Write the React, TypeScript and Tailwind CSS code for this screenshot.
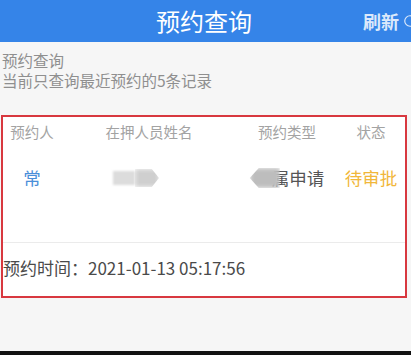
import { RotateCw } from 'lucide-react';

const FONT = { fontFamily: '"Noto Sans CJK SC", "Noto Sans", sans-serif' };

const COLS = 'grid grid-cols-[58px_176px_100px_1fr]';

export default function App() {
  return (
    <div className="w-[411px] h-[355px] overflow-hidden bg-[#f6f6f6] flex flex-col" style={FONT}>
      {/* Header */}
      <div className="h-[42px] bg-[#3584e8] flex items-center shrink-0 overflow-hidden">
        <div className="w-[156px]" />
        <span className="flex-1 text-white text-[24px] leading-none">预约查询</span>
        <div className="flex items-center gap-[4px] text-[#dce9fb] mr-[-6px]">
          <span className="text-[18px] font-bold">刷新</span>
          <RotateCw size={14} strokeWidth={2} />
        </div>
      </div>

      {/* Intro */}
      <div className="px-[2px] pt-[8px] text-[15.5px] leading-[20px] text-[#8f8f8f] shrink-0">
        <div>预约查询</div>
        <div>当前只查询最近预约的5条记录</div>
      </div>

      {/* Card */}
      <div className="mt-[25px] ml-[1px] w-[406px] border-2 border-[#d8383f] bg-white shrink-0 flex flex-col">
        <div className={`${COLS} h-[30px] items-center text-[14.5px] text-[#a3a3a3] text-center`}>
          <span>预约人</span>
          <span>在押人员姓名</span>
          <span>预约类型</span>
          <span>状态</span>
        </div>
        <div className={`${COLS} h-[95px] items-start pt-[17px] text-[17.5px] leading-[28px] text-center`}>
          <span className="text-[#4a8fd9]">常</span>
          <div className="flex items-center justify-center h-[28px] pr-[26px]">
            <div className="w-[22px] h-[14px] bg-[#dcdcdc] blur-[1px]" />
            <div className="w-[24px] h-[18px] bg-[#cfcfcf] blur-[2px] [clip-path:polygon(0_0,70%_0,100%_50%,70%_100%,0_100%)]" />
          </div>
          <div className="flex items-center justify-center h-[28px]">
            <div className="w-[30px] h-[20px] bg-[#bdbdbd] blur-[2px] mr-[-8px] [clip-path:polygon(30%_0,100%_0,100%_100%,30%_100%,0_50%)]" />
            <span className="text-[#555555] whitespace-nowrap">属申请</span>
          </div>
          <span className="text-[#f1b73a] whitespace-nowrap">待审批</span>
        </div>
        <div className="h-px bg-[#ebebeb]" />
        <div className="h-[53px] flex items-center pb-[4px] text-[17px] text-[#4a4a4a]">
          预约时间：2021-01-13 05:17:56
        </div>
      </div>

      <div className="flex-1" />
      <div className="h-[4px] bg-[#111111] shrink-0" />
    </div>
  );
}
